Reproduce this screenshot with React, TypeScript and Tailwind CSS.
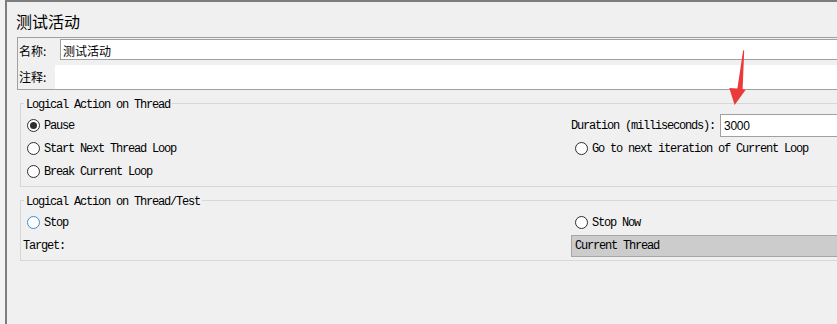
import type { ReactNode } from "react";

const mono = "font-['Liberation_Mono',monospace] text-[12px] tracking-[-1.2px] text-black";
const cjk = "font-['Noto_Sans_CJK_SC',sans-serif] text-black";

const Radio = ({ checked = false, focus = false }: { checked?: boolean; focus?: boolean }) => (
	<span
		className={
			focus
				? "flex h-[13px] w-[13px] shrink-0 items-center justify-center rounded-full border-[1.5px] border-[#3b8bd6] bg-white"
				: "flex h-[13px] w-[13px] shrink-0 items-center justify-center rounded-full border border-[#2e2e2e] bg-white"
		}
	>
		{checked && <span className="h-[7px] w-[7px] rounded-full bg-[#2e2e2e]" />}
	</span>
);

const RadioRow = ({ label, checked, focus }: { label: string; checked?: boolean; focus?: boolean }) => (
	<div className="flex h-[23px] items-center gap-[4px] pl-[4px]">
		<Radio checked={checked} focus={focus} />
		<span className={mono}>{label}</span>
	</div>
);

const Group = ({ title, children }: { title: string; children: ReactNode }) => (
	<fieldset className="ml-[3px] border border-r-0 border-[#d7d7d7] pb-[3px] pl-[2px] pt-[2px]">
		<legend className={`ml-[1px] h-[18px] px-[2px] pt-[4px] leading-[14px] ${mono}`}>{title}</legend>
		<div className="grid grid-cols-[548px_1fr]">{children}</div>
	</fieldset>
);

export default function App() {
	return (
		<div className="relative flex h-[324px] w-[837px] overflow-hidden bg-[#f0f0f0]">
			<div className="w-[5px] shrink-0 bg-[#f2f2f2]" />
			<div className="flex flex-1 flex-col border-l-2 border-t-2 border-[#7d7d7d] pl-[10px]">
				<div className={`-ml-[1px] mt-[9px] text-[16px] leading-[20px] ${cjk}`}>测试活动</div>

				{/* name / comment */}
				<div className="mt-[6px] flex flex-col border border-r-0 border-[#a0a0a0]">
					<div className="flex h-[22px]">
						<div className={`flex w-[42px] items-center pl-[1px] pt-[3px] text-[12px] ${cjk}`}>名称:</div>
						<div className={`mt-[1px] flex h-[21px] flex-1 items-center border-b border-l border-t border-[#a0a0a0] bg-white pl-[2px] pt-[3px] text-[12px] ${cjk}`}>
							测试活动
						</div>
					</div>
					<div className="mt-[5px] flex h-[24px]">
						<div className={`flex w-[37px] items-center pl-[1px] text-[12px] ${cjk}`}>注释:</div>
						<div className="flex-1 bg-white" />
					</div>
				</div>

				<div className="mt-[4px]">
					<Group title="Logical Action on Thread">
						<RadioRow label="Pause" checked />
						<div className="flex h-[23px] items-center">
							<span className={mono}>Duration (milliseconds):</span>
							<div className="ml-[5px] flex h-[23px] flex-1 items-center border border-r-0 border-[#a0a0a0] bg-white pl-[3px] font-['Liberation_Sans',sans-serif] text-[12px] tracking-[-0.3px] text-black">
								3000
							</div>
						</div>
						<RadioRow label="Start Next Thread Loop" />
						<RadioRow label="Go to next iteration of Current Loop" />
						<RadioRow label="Break Current Loop" />
						<div />
					</Group>
				</div>

				<div className="mt-[4px]">
					<Group title="Logical Action on Thread/Test">
						<RadioRow label="Stop" focus />
						<RadioRow label="Stop Now" />
						<div className="flex h-[23px] items-center">
							<span className={mono}>Target:</span>
						</div>
						<div className="flex h-[23px] items-center">
							<div className={`flex h-[22px] flex-1 items-center border border-r-0 border-[#a6a6a6] bg-[#cccccc] pl-[3px] ${mono} text-[#7a7a7a]`}>
								Current Thread
							</div>
						</div>
					</Group>
				</div>
			</div>

			{/* annotation arrow */}
			<svg className="absolute left-[725px] top-[45px]" width="25" height="64" viewBox="725 45 25 64">
				<polygon
					points="743.2,50 744.2,51 742.6,89 745.5,90 734.6,105 729.3,88 737.4,88.6"
					fill="#ea3a3a"
				/>
			</svg>
		</div>
	);
}
